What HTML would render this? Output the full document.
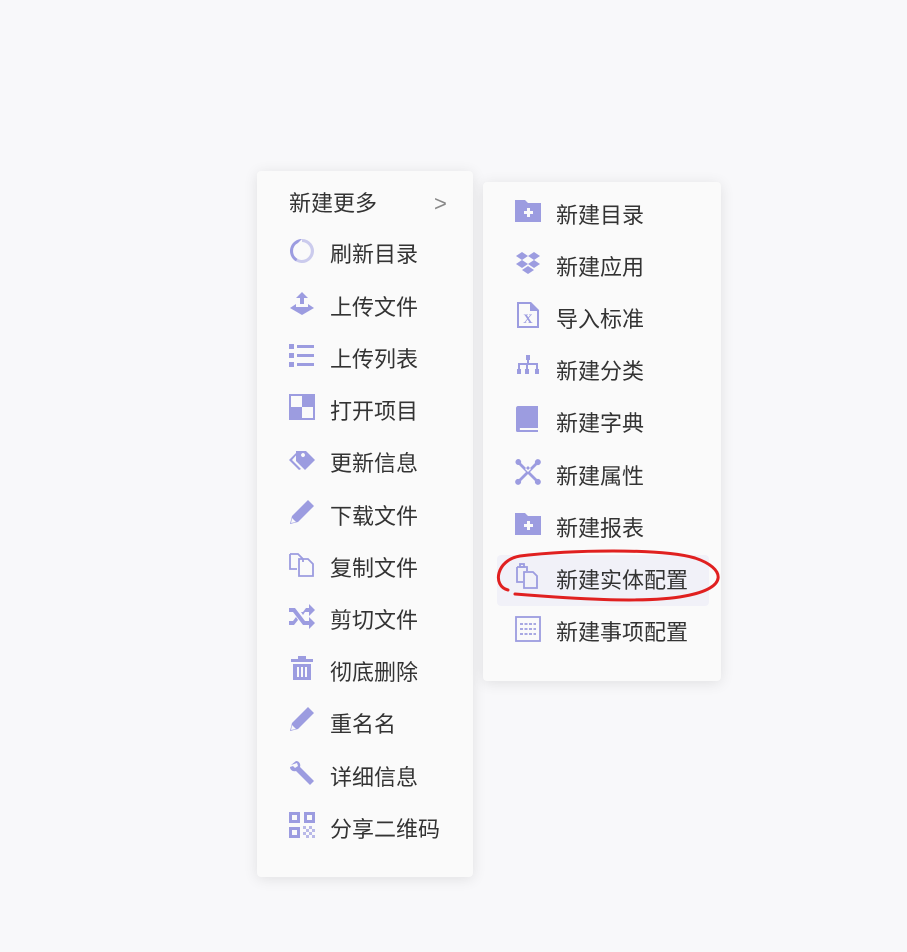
<!DOCTYPE html>
<html><head><meta charset="utf-8"><style>
body{margin:0;width:907px;height:952px;background:#f8f8fa;position:relative;overflow:hidden;font-family:"Liberation Sans","Noto Sans CJK SC",sans-serif;}
.m{position:absolute;background:#fafafa;border-radius:4px;box-shadow:0 2px 14px rgba(0,0,0,0.10);}
.t{position:absolute;font-size:22px;color:#333;line-height:24px;white-space:nowrap;}
svg.i{position:absolute;width:26px;height:26px;fill:#9c9ce0;}
svg.s{fill:none !important;}
</style></head><body>
<div class="m" style="left:257px;top:171px;width:216px;height:706px"></div>
<div class="m" style="left:483px;top:182px;width:238px;height:499px"></div>
<div class="t" style="left:289px;top:192px">新建更多</div>
<div class="t" style="left:434px;top:192px;color:#888">&gt;</div>

<svg class="i" style="left:289px;top:238px" viewBox="0 0 26 26"><path d="M13 1a12 12 0 1 1-6 22.4l1.5-2.5A9 9 0 1 0 13 4z" opacity=".5"/><path d="M13 1A12 12 0 0 0 7 23.4l1.5-2.6A9 9 0 0 1 9 5z"/></svg>
<div class="t" style="left:330px;top:243px">刷新目录</div>
<svg class="i" style="left:289px;top:291px" viewBox="0 0 26 26"><path d="M13 1l6 6h-4v6h-4V7H7z"/><path d="M1 17l6-4v3h12v-3l6 4-12 7z"/></svg>
<div class="t" style="left:330px;top:296px">上传文件</div>
<svg class="i" style="left:289px;top:343px" viewBox="0 0 26 26"><rect x="0" y="1" width="5" height="5"/><rect x="8" y="2" width="17" height="3"/><rect x="0" y="10" width="5" height="5"/><rect x="8" y="11" width="17" height="3"/><rect x="0" y="19" width="5" height="5"/><rect x="8" y="20" width="17" height="3"/></svg>
<div class="t" style="left:330px;top:348px">上传列表</div>
<svg class="i" style="left:289px;top:394px" viewBox="0 0 26 26"><path d="M0 0h26v26H0zM2 2v11h11V2zM13 13v11h11V13z"/></svg>
<div class="t" style="left:330px;top:400px">打开项目</div>
<svg class="i" style="left:289px;top:448px" viewBox="0 0 26 26"><path d="M7 3h10l9 9-10 10-9-9V3zm9 4a2 2 0 1 0 0 .1zM0 12l8-8h2L3 12l9 9-2 1z"/></svg>
<div class="t" style="left:330px;top:452px">更新信息</div>
<svg class="i" style="left:289px;top:499px" viewBox="0 0 26 26"><path d="M19 1l6 6L9 23l-8 2 2-8zM3 19l-1 5 5-1z"/></svg>
<div class="t" style="left:330px;top:505px">下载文件</div>
<svg class="i s" style="left:289px;top:551px" viewBox="0 0 26 26" stroke="#9c9ce0" stroke-width="1.8"><path d="M1 3h8l5 5v3M1 3v15h7"/><path d="M10 8h9l5 5v12H10z"/></svg>
<div class="t" style="left:330px;top:557px">复制文件</div>
<svg class="i" style="left:289px;top:603px" viewBox="0 0 26 26"><path d="M0 5h6l10 13h4v-4l6 6-6 6v-4h-6L4 9H0zM0 18h4l3-4 2 3-4 5H0zM14 9l3-4h3V1l6 6-6 6V9h-4l-2 3-2-3z"/></svg>
<div class="t" style="left:330px;top:609px">剪切文件</div>
<svg class="i" style="left:289px;top:655px" viewBox="0 0 26 26"><path d="M9 1h8v3h7v3H2V4h7zM4 9h18v16H4zm4 3v10h2V12zm4 0v10h2V12zm4 0v10h2V12z"/></svg>
<div class="t" style="left:330px;top:661px">彻底删除</div>
<svg class="i" style="left:289px;top:706px" viewBox="0 0 26 26"><path d="M19 1l6 6L9 23l-8 2 2-8zM3 19l-1 5 5-1z"/></svg>
<div class="t" style="left:330px;top:713px">重名名</div>
<svg class="i" style="left:289px;top:760px" viewBox="0 0 26 26"><path d="M2 5l5-4c3 0 5 3 4 6l14 14-4 4L7 11C4 12 1 10 1 7l3-1 2 2 3-2-1-3z"/></svg>
<div class="t" style="left:330px;top:766px">详细信息</div>
<svg class="i" style="left:289px;top:812px" viewBox="0 0 26 26"><path d="M0 0h11v11H0zm3 3v5h5V3zM15 0h11v11H15zm3 3v5h5V3zM0 15h11v11H0zm3 3v5h5v-5z"/><path d="M14 14h3v3h-3zm6 0h3v3h-3zm-3 3h3v3h-3zm6 0h3v3h-3zm-9 3h3v3h-3zm6 0h3v3h-3zm-3 3h3v3h-3zm6 0h3v3h-3z" opacity=".7"/></svg>
<div class="t" style="left:330px;top:818px">分享二维码</div>

<div style="position:absolute;left:497px;top:555px;width:212px;height:51px;background:#f1f1f8;border-radius:4px"></div>
<svg class="i" style="left:515px;top:199px" viewBox="0 0 26 26"><path d="M0 1h10l3 3h13v19H0zm12 8v3H9v3h3v3h3v-3h3v-3h-3V9z"/></svg>
<div class="t" style="left:556px;top:204px">新建目录</div>
<svg class="i" style="left:515px;top:251px" viewBox="0 0 26 26"><path d="M7 1l6 4-6 4-6-4zM19 1l6 4-6 4-6-4zM7 9l6 4-6 4-6-4zM19 9l6 4-6 4-6-4zM7 19l6-4 6 4-6 4z"/></svg>
<div class="t" style="left:556px;top:256px">新建应用</div>
<svg class="i" style="left:515px;top:302px" viewBox="0 0 26 26"><path d="M2 0h14l8 8v18H2zm2 2v22h18V9h-7V2z"/><text x="13" y="21" font-size="13" font-weight="bold" font-family="Liberation Serif" text-anchor="middle" fill="#9c9ce0">X</text></svg>
<div class="t" style="left:556px;top:308px">导入标准</div>
<svg class="i" style="left:515px;top:355px" viewBox="0 0 26 26"><path d="M11 0h4v5h-1v3h9v6h1v5h-4v-5h1v-4h-8v4h1v5h-4v-5h1v-4H5v4h1v5H2v-5h1V8h9V5h-1z"/></svg>
<div class="t" style="left:556px;top:360px">新建分类</div>
<svg class="i" style="left:515px;top:406px" viewBox="0 0 26 26"><path d="M3 0h20v22H5a2 2 0 0 0 0 2h18v2H3c-2 0-2-1-2-2V2c0-1 1-2 2-2z"/></svg>
<div class="t" style="left:556px;top:412px">新建字典</div>
<svg class="i" style="left:515px;top:459px" viewBox="0 0 26 26"><path d="M3 0a3 3 0 0 1 3 4l7 7 7-7a3 3 0 1 1 2 2l-7 7 7 7a3 3 0 1 1-2 2l-7-7-7 7a3 3 0 1 1-2-2l7-7-7-7A3 3 0 0 1 3 0zm10 7l-3 3 3 3 3-3z"/></svg>
<div class="t" style="left:556px;top:465px">新建属性</div>
<svg class="i" style="left:515px;top:512px" viewBox="0 0 26 26"><path d="M0 1h10l3 3h13v19H0zm12 8v3H9v3h3v3h3v-3h3v-3h-3V9z"/></svg>
<div class="t" style="left:556px;top:517px">新建报表</div>
<svg class="i s" style="left:515px;top:563px" viewBox="0 0 26 26" stroke="#9c9ce0" stroke-width="1.8"><path d="M2 4h10v4M2 4v15h6"/><path d="M9 9h9l4 4v12H9z"/><rect x="5" y="1" width="4" height="3"/></svg>
<div class="t" style="left:556px;top:569px">新建实体配置</div>
<svg class="i s" style="left:515px;top:616px" viewBox="0 0 26 26" stroke="#9c9ce0" stroke-width="1.8"><rect x="1" y="1" width="24" height="24"/><path d="M5 8h16M5 13h16M5 18h16" stroke-dasharray="3 1.5"/></svg>
<div class="t" style="left:556px;top:621px">新建事项配置</div>

<svg style="position:absolute;left:490px;top:548px" width="245" height="60" viewBox="0 0 245 60" fill="none" stroke="#e02020" stroke-width="3" stroke-linecap="round"><path d="M18 42C2 38 6 12 30 8c50-6 140-8 175 2 30 10 35 30-10 38-40 8-120 2-170-2"/></svg>
</body></html>
